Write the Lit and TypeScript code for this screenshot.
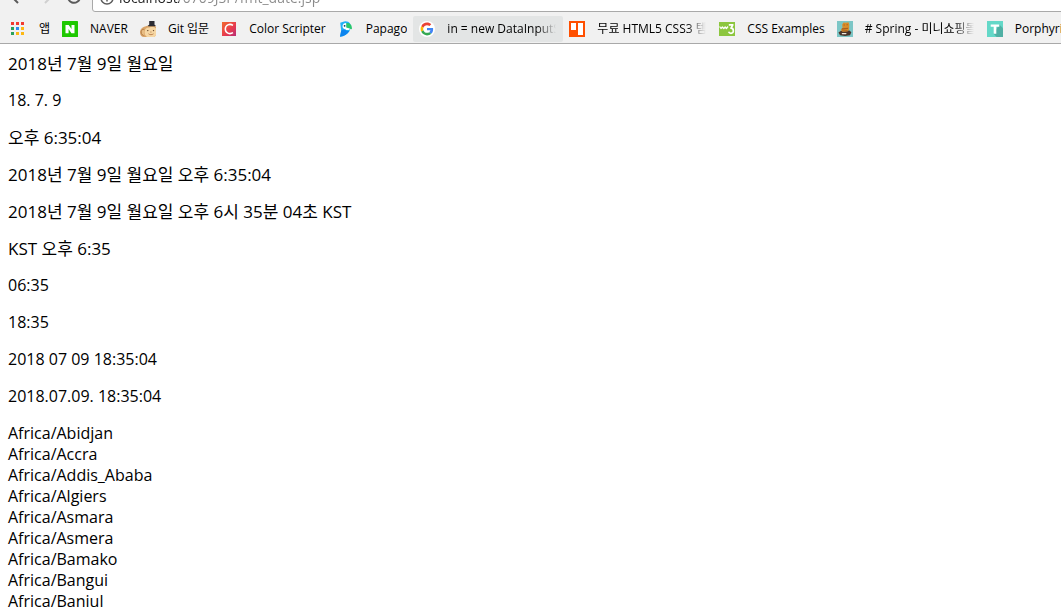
import { LitElement, html, css, svg } from "lit";
import { customElement } from "lit/decorators.js";
import { classMap } from "lit/directives/class-map.js";

const icon = (body: unknown) => html`<svg class="icon" viewBox="0 0 16 16" aria-hidden="true">${body}</svg>`;

const appsIcon = icon(svg`
  <path fill="#f23b30" d="M0 1h3v3H0zM5 1h3v3H5zM10 1h3v3h-3z"/>
  <path fill="#2ba15a" d="M0 6h3v3H0zM0 11h3v3H0z"/>
  <path fill="#2d8cf0" d="M5 6h3v3H5z"/>
  <path fill="#fdb813" d="M10 6h3v3h-3zM5 11h3v3H5zM10 11h3v3h-3z"/>`);

const naverIcon = icon(svg`
  <rect width="16" height="16" rx="0.6" fill="#1ec800"/>
  <path fill="#fff" d="M3.500 4h3.200l2.800 4V4h3v8.200H9.400L6.600 8.100v4.100H3.500z"/>`);

const monkeyIcon = icon(svg`
  <path fill="#d9a468" d="M0 11.500C0 8 2.500 6 5 5.500L8 4.500h6.500L16 6v8.500L14 16H4C1.500 16 0 14 0 11.500z"/>
  <path fill="#f6d7a4" d="M4.500 11C4.500 7.500 7 6 9.500 6.500c2.500-.8 5-.4 6.500.9V14.500L14 16H7c-1.500-1-2.500-3-2.500-5z"/>
  <path fill="#e8bd83" d="M1.200 11.500c0-1.700.9-2.700 2-2.700.8 0 1 1 .8 2.500l.6 2.700c-1.800.3-3.400-.8-3.400-2.500z"/>
  <path fill="none" stroke="#a56f3c" stroke-width="0.700" d="M3.600 14.500C1.300 14 .6 11 1.800 9.200c.7-1 1.800-1 2.400-.5"/>
  <path fill="#2b2b33" d="M9.200 0h5.300v3.700l1 .6v.9H8.200v-.9l1-.6z"/>
  <circle cx="7.800" cy="9.600" r="0.700" fill="#5a3a22"/><circle cx="13.500" cy="9.600" r="0.700" fill="#5a3a22"/>
  <path fill="none" stroke="#b0703f" stroke-width="0.800" d="M8.500 12.800c1.400 1.200 3.500 1.200 5 0M10.300 11h1.200"/>`);

const scripterIcon = icon(svg`
  <defs><linearGradient id="cs" x1="0" y1="0" x2="1" y2="1">
    <stop offset="0" stop-color="#f26a2e"/><stop offset="0.600" stop-color="#e63950"/><stop offset="1" stop-color="#b52e78"/>
  </linearGradient></defs>
  <rect x="1" y="1" width="14" height="14" fill="url(#cs)"/>
  <path fill="none" stroke="#fff" stroke-width="1.500" d="M12 4.300C8.600 2.200 4.300 4 4.300 8s4.300 5.800 7.700 3.700"/>`);

const papagoIcon = icon(svg`
  <path fill="#22b0f7" d="M2.200 1.800L4.500.9C7.500-.3 10.500.3 12 2.500c1.600 2.800.6 6-1 8.200-1.800 2.500-4.600 4.600-9 5L3.200 10z"/>
  <path fill="#0d84ee" d="M3.200 9.500l3.300-1.300c1.300 1.300 2.800 1.800 4.900 1.900-1.800 3-4.900 5.200-9.400 5.600z"/>
  <path fill="#fff" d="M4.500 5C4.700 2.800 6.500 1.800 8.500 2v6.500C6.300 8.600 4.300 7.200 4.500 5z"/>
  <circle cx="6.600" cy="4.800" r="0.900" fill="#17324f"/>
  <path fill="#28c66c" d="M8.300 2c3.700-.5 5.900 2 5.600 6.200L8.300 6.800z"/>
  <path fill="#fff" d="M8 6.600l3.800 1-.5 1.400H8z"/>`);

const googleIcon = html`<svg class="icon" viewBox="-6 -6 60 60" aria-hidden="true">
  <circle cx="24" cy="24" r="30" fill="#fff"/>
  <path fill="#EA4335" d="M24 9.500c3.540 0 6.710 1.220 9.210 3.600l6.850-6.850C35.900 2.380 30.470 0 24 0 14.620 0 6.510 5.380 2.560 13.220l7.980 6.190C12.430 13.720 17.740 9.500 24 9.500z"/>
  <path fill="#4285F4" d="M46.980 24.550c0-1.570-.15-3.090-.38-4.550H24v9.020h12.940c-.58 2.960-2.260 5.480-4.780 7.180l7.730 6c4.510-4.180 7.090-10.360 7.090-17.650z"/>
  <path fill="#FBBC05" d="M10.530 28.590c-.48-1.450-.76-2.990-.76-4.590s.27-3.140.76-4.590l-7.980-6.190C.92 16.460 0 20.120 0 24c0 3.880.92 7.540 2.560 10.780l7.970-6.190z"/>
  <path fill="#34A853" d="M24 48c6.480 0 11.930-2.130 15.890-5.810l-7.730-6c-2.150 1.450-4.920 2.300-8.160 2.300-6.260 0-11.570-4.220-13.470-9.910l-7.980 6.190C6.510 42.620 14.620 48 24 48z"/>
</svg>`;

const templateIcon = icon(svg`
  <rect width="16" height="16" fill="#ff4f00"/>
  <path fill="#fff" d="M2 2h5v7H2zM9 2h5v12H9z"/>`);

const w3Icon = icon(svg`
  <rect y="1" width="16" height="14" fill="#8cc63f"/>
  <path fill="none" stroke="#fff" stroke-width="1.300" stroke-linejoin="round" d="M.6 5.500l1.400 2 1.400-1.500 1.400 1.500L6.200 6l1.200 1.500L9 5.500"/>
  <path fill="none" stroke="#fff" stroke-width="1.700" stroke-linejoin="round" d="M9.800 3.800h4L12 7.200c3 0 3.300 5.200 0 5.200-1.200 0-2-.6-2.400-1.600"/>`);

const springIcon = icon(svg`
  <rect width="16" height="16" fill="#7cc6c6"/>
  <path fill="#4a3429" d="M1.500 11.500L4 9.800l8.500-.3 1.800 1.800-1.300 2.900-5 .9-5-.9z"/>
  <path fill="#d98e2b" d="M5.200 3.500L6.500 1.500 9 1.800l2.500-.6.8 2.300-.2 5-1.600 2-5 .3-1.800-1.500 1.800-2.500z"/>
  <path fill="#a65f22" d="M4.800 7.300l6.500-.6-.4 1.200-6.300.8zM6.600 3.500h1.200v1H6.600zM9.600 3.300h1.200v1H9.600zM5 9.600l5.500-.4v.8H5z"/>
  <path fill="#efe8da" d="M4.600 12h5l-.6 1.300H5.200z"/>`);

const tIcon = icon(svg`
  <rect width="16" height="16" fill="#64d8c8"/>
  <path fill="#50b0a4" d="M12.300 3.500L16 7.200V16H9.700L6.500 12.800z"/>
  <path fill="#fff" d="M3.700 3.500h8.600v2.300H9.300v7H6.700v-7h-3z"/>`);

interface Bookmark {
  label: string;
  icon: unknown;
  hover?: boolean;
  long?: boolean;
}

const bookmarks: Bookmark[] = [
  { label: "앱", icon: appsIcon },
  { label: "NAVER", icon: naverIcon },
  { label: "Git 입문", icon: monkeyIcon },
  { label: "Color Scripter", icon: scripterIcon },
  { label: "Papago", icon: papagoIcon },
  { label: "in = new DataInputStream", icon: googleIcon, hover: true, long: true },
  { label: "무료 HTML5 CSS3 템플릿", icon: templateIcon, long: true },
  { label: "CSS Examples", icon: w3Icon },
  { label: "# Spring - 미니쇼핑몰", icon: springIcon, long: true },
  { label: "Porphyrio", icon: tIcon },
];

const dates = [
  "2018년 7월 9일 월요일",
  "18. 7. 9",
  "오후 6:35:04",
  "2018년 7월 9일 월요일 오후 6:35:04",
  "2018년 7월 9일 월요일 오후 6시 35분 04초 KST",
  "KST 오후 6:35",
  "06:35",
  "18:35",
  "2018 07 09 18:35:04",
  "2018.07.09. 18:35:04",
];

const zones = [
  "Africa/Abidjan",
  "Africa/Accra",
  "Africa/Addis_Ababa",
  "Africa/Algiers",
  "Africa/Asmara",
  "Africa/Asmera",
  "Africa/Bamako",
  "Africa/Bangui",
  "Africa/Banjul",
];

const hangul = /[가-힣]/;

@customElement("browser-toolbar")
class BrowserToolbar extends LitElement {
  static styles = css`
    :host {
      display: flex;
      align-items: flex-end;
      height: 12px;
      overflow: hidden;
      background: #f1f1f1;
    }
    .nav {
      display: flex;
      flex: none;
      gap: 13px;
      padding: 0 10px 7px 8px;
    }
    button {
      width: 16px;
      height: 16px;
      padding: 0;
      border: 0;
      background: none;
      color: #5a5a5a;
    }
    button:disabled {
      color: #d0d0d0;
    }
    svg {
      display: block;
      width: 16px;
      height: 16px;
      fill: none;
      stroke: currentColor;
      stroke-width: 2;
    }
    .omnibox {
      display: flex;
      flex: 1;
      align-items: center;
      gap: 4px;
      box-sizing: border-box;
      height: 28px;
      margin-right: -4px;
      padding: 0 6px;
      border: 1px solid #a9a9a9;
      border-radius: 3px;
      background: #fff;
      color: #5a5a5a;
    }
    .omnibox svg {
      flex: none;
      stroke-width: 1.5;
    }
    input {
      flex: 1;
      min-width: 0;
      height: 24px;
      padding: 0;
      border: 0;
      outline: 0;
      font: 14px/24px "Open Sans", sans-serif;
      background: linear-gradient(90deg, #222 60px, #8a8a8a 60px);
      -webkit-background-clip: text;
      -webkit-text-fill-color: transparent;
    }
  `;

  render() {
    return html`
      <div class="nav">
        <button aria-label="뒤로"><svg viewBox="0 0 16 16"><path d="M16 8H4M10 2L4 8l6 6"/></svg></button>
        <button aria-label="앞으로" disabled><svg viewBox="0 0 16 16"><path d="M2 8h12M8 2l6 6-6 6"/></svg></button>
        <button aria-label="새로고침"><svg viewBox="0 0 16 16"><path d="M13 4.500A6 6 0 1 0 14 8M14 1v4.500H9.500"/></svg></button>
      </div>
      <div class="omnibox">
        <svg viewBox="0 0 16 16"><circle cx="8" cy="8" r="6"/><path d="M8 7v4.500M8 4v1.600"/></svg>
        <input aria-label="주소" .value=${"localhost/0709JSP/fmt_date.jsp"} spellcheck="false">
      </div>
    `;
  }
}

@customElement("bookmark-bar")
class BookmarkBar extends LitElement {
  static styles = css`
    :host {
      display: flex;
      overflow: hidden;
      padding: 4px 0 1px 5px;
      border-bottom: 1px solid #a9a9a9;
      background: #f1f1f1;
    }
    .bookmark {
      display: flex;
      flex: none;
      align-items: center;
      gap: 12px;
      box-sizing: border-box;
      height: 26px;
      padding: 0 6px;
      border-radius: 2px;
      color: #000;
      font: 12px/20px "Open Sans", "Noto Sans CJK KR", sans-serif;
      text-decoration: none;
      white-space: nowrap;
    }
    .bookmark.hover,
    .bookmark:hover {
      background: #e3e5e5;
    }
    .icon {
      display: block;
      flex: none;
      width: 16px;
      height: 16px;
    }
    .label {
      max-width: 110px;
      overflow: hidden;
    }
    .label.long {
      -webkit-mask-image: linear-gradient(90deg, #000 90px, transparent 109px);
      mask-image: linear-gradient(90deg, #000 90px, transparent 109px);
    }
  `;

  render() {
    return bookmarks.map(
      (b) => html`<a class=${classMap({ bookmark: true, hover: !!b.hover })} href="#">
        ${b.icon}<span class=${classMap({ label: true, long: !!b.long })}>${b.label}</span>
      </a>`
    );
  }
}

@customElement("app-root")
class AppRoot extends LitElement {
  static styles = css`
    :host {
      display: block;
      height: 100vh;
      overflow: hidden;
      background: #fff;
      color: #000;
    }
    main {
      padding: 9px 8px;
      font: 16px/21px "Open Sans", "Noto Sans CJK KR", sans-serif;
    }
    p {
      margin: 0 0 16px;
    }
    .korean {
      font-size: 17px;
    }
  `;

  render() {
    return html`
      <browser-toolbar></browser-toolbar>
      <bookmark-bar></bookmark-bar>
      <main>
        ${dates.map((d) => html`<p class=${classMap({ korean: hangul.test(d) })}>${d}</p>`)}
        ${zones.map((z) => html`<div>${z}</div>`)}
      </main>
    `;
  }
}
